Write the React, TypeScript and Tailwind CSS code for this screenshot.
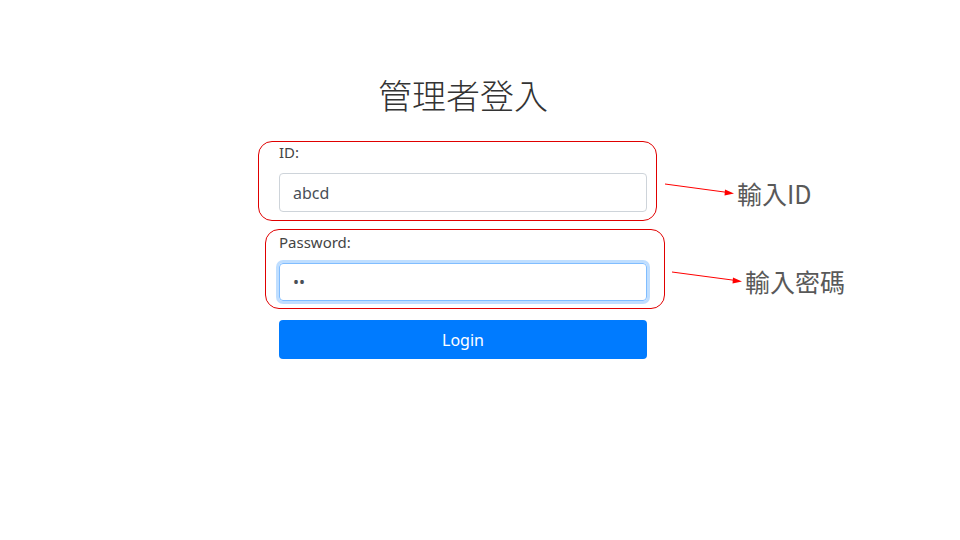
export default function App() {
  return (
    <div
      className="relative h-[540px] w-[960px] overflow-hidden bg-white"
      style={{ fontFamily: '"Noto Sans", "Noto Sans CJK TC", sans-serif' }}
    >
      {/* Login form */}
      <div className="flex flex-col items-center pt-[72px] pr-[34px]">
        <h1 className="text-[34px] leading-[46px] font-light text-[#333] [font-family:'Noto_Sans_CJK_TC',sans-serif]">
          管理者登入
        </h1>

        <form className="mt-[23px] flex w-[368px] flex-col">
          <label className="mb-[10px] text-[15px] leading-[22px] text-[#444]">ID:</label>
          <input
            readOnly
            value="abcd"
            className="h-[39px] rounded-[4px] border border-[#ced4da] px-[13px] text-[16px] text-[#495057] outline-none"
          />

          <label className="mt-[19px] mb-[10px] text-[15px] leading-[22px] text-[#444]">Password:</label>
          <input
            readOnly
            type="password"
            value="ab"
            className="h-[38px] rounded-[4px] border border-[#80bdff] px-[13px] text-[16px] text-[#495057] shadow-[0_0_0_3px_rgba(0,123,255,0.25)] outline-none"
          />

          <button
            type="button"
            className="mt-[19px] h-[39px] rounded-[4px] bg-[#007bff] text-[16px] text-white"
          >
            Login
          </button>
        </form>
      </div>

      {/* Annotation boxes */}
      <div className="absolute left-[258px] top-[141px] h-[80px] w-[399px] rounded-[14px] border border-[#e00000]" />
      <div className="absolute left-[265px] top-[229px] h-[80px] w-[400px] rounded-[14px] border border-[#e00000]" />

      {/* Annotation arrows */}
      <svg className="pointer-events-none absolute left-0 top-0" width="960" height="540">
        <line x1="665" y1="184" x2="728" y2="192.5" stroke="#ff0000" strokeWidth="1" />
        <polygon points="734,193.5 725,189.5 724.5,195.5" fill="#ff0000" />
        <line x1="672" y1="272" x2="736" y2="280.5" stroke="#ff0000" strokeWidth="1" />
        <polygon points="742,281.5 733,277.5 732.5,283.5" fill="#ff0000" />
      </svg>

      <div className="absolute left-[737px] top-[176px] text-[25px] leading-[34px] text-[#595959] [font-family:'Noto_Sans_CJK_TC',sans-serif]">
        輸入ID
      </div>
      <div className="absolute left-[745px] top-[264px] text-[25px] leading-[34px] text-[#595959] [font-family:'Noto_Sans_CJK_TC',sans-serif]">
        輸入密碼
      </div>
    </div>
  );
}
